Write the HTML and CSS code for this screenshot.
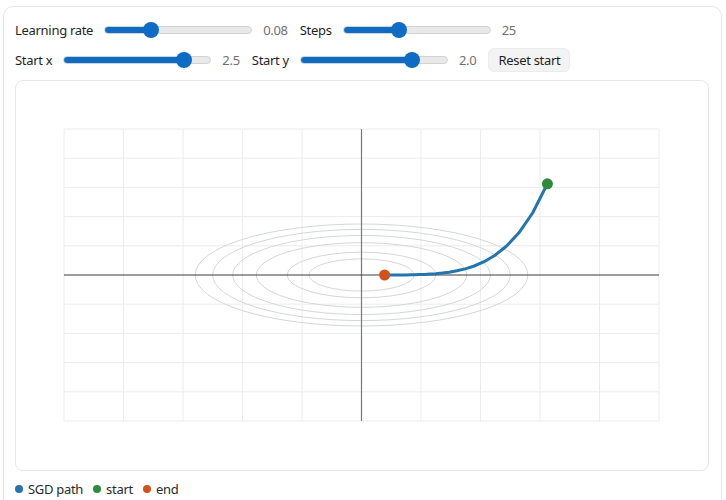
FILE: index.html
```html
<!DOCTYPE html>
<html lang="en">
<head>
<meta charset="utf-8">
<title>SGD path</title>
<link rel="stylesheet" href="styles.css">
</head>
<body>
<div class="card">
  <div class="controls">
    <div class="row">
      <label class="ctl"><span class="lbl">Learning rate</span><input class="slider" type="range" min="0.01" max="0.25" step="0.01" value="0.08" style="--p:46.5px"><span class="val">0.08</span></label>
      <label class="ctl"><span class="lbl">Steps</span><input class="slider" type="range" min="5" max="60" step="1" value="25" style="--p:56px"><span class="val">25</span></label>
    </div>
    <div class="row">
      <label class="ctl"><span class="lbl">Start x</span><input class="slider" type="range" min="-3.5" max="3.5" step="0.1" value="2.5" style="--p:121px"><span class="val">2.5</span></label>
      <label class="ctl"><span class="lbl">Start y</span><input class="slider" type="range" min="-3" max="3.3" step="0.1" value="2.0" style="--p:112.8px"><span class="val">2.0</span></label>
      <button class="btn" type="button">Reset start</button>
    </div>
  </div>
  <div class="plot">
    <svg class="chart" width="691" height="389" viewBox="0 0 691 389">
      <g class="grid">
        <line x1="48" y1="48" x2="48" y2="340"/>
        <line x1="107.5" y1="48" x2="107.5" y2="340"/>
        <line x1="167" y1="48" x2="167" y2="340"/>
        <line x1="226.5" y1="48" x2="226.5" y2="340"/>
        <line x1="286" y1="48" x2="286" y2="340"/>
        <line x1="405" y1="48" x2="405" y2="340"/>
        <line x1="464.5" y1="48" x2="464.5" y2="340"/>
        <line x1="524" y1="48" x2="524" y2="340"/>
        <line x1="583.5" y1="48" x2="583.5" y2="340"/>
        <line x1="643" y1="48" x2="643" y2="340"/>
        <line x1="48" y1="48" x2="643" y2="48"/>
        <line x1="48" y1="77.2" x2="643" y2="77.2"/>
        <line x1="48" y1="106.4" x2="643" y2="106.4"/>
        <line x1="48" y1="135.6" x2="643" y2="135.6"/>
        <line x1="48" y1="164.8" x2="643" y2="164.8"/>
        <line x1="48" y1="223.2" x2="643" y2="223.2"/>
        <line x1="48" y1="252.4" x2="643" y2="252.4"/>
        <line x1="48" y1="281.6" x2="643" y2="281.6"/>
        <line x1="48" y1="310.8" x2="643" y2="310.8"/>
        <line x1="48" y1="340" x2="643" y2="340"/>
      </g>
      <g class="contours">
        <ellipse cx="345.5" cy="194" rx="52.6" ry="16.1"/>
        <ellipse cx="345.5" cy="194" rx="74.4" ry="22.8"/>
        <ellipse cx="345.5" cy="194" rx="105.2" ry="32.3"/>
        <ellipse cx="345.5" cy="194" rx="128.8" ry="39.5"/>
        <ellipse cx="345.5" cy="194" rx="148.8" ry="45.6"/>
        <ellipse cx="345.5" cy="194" rx="166.3" ry="51"/>
      </g>
      <line class="axis-y" x1="345.5" y1="48" x2="345.5" y2="340"/>
      <line class="axis-x" x1="48" y1="194" x2="643" y2="194"/>
      <polyline class="sgd" points="531.4,102.8 516.6,132 502.9,151.8 490.3,165.3 478.7,174.5 468.1,180.7 458.2,185 449.2,187.9 440.9,189.8 433.3,191.2 426.3,192.1 419.8,192.7 413.9,193.1 408.4,193.4 403.4,193.6 398.7,193.7 394.5,193.8 390.6,193.9 387,193.9 383.6,193.9 380.6,194 377.8,194 375.2,194 372.8,194 370.6,194 368.6,194"/>
      <circle class="pt-start" cx="531.4" cy="102.8" r="5.5"/>
      <circle class="pt-end" cx="368.6" cy="194" r="5.5"/>
    </svg>
  </div>
  <div class="legend">
    <span class="item"><span class="dot dot-path"></span>SGD path</span>
    <span class="item"><span class="dot dot-start"></span>start</span>
    <span class="item"><span class="dot dot-end"></span>end</span>
  </div>
</div>
</body>
</html>
```

FILE: styles.css
```css
html, body {
  margin: 0;
  padding: 0;
  background: #ffffff;
}

body {
  font-family: "Noto Sans", "Open Sans", "DejaVu Sans", sans-serif;
  font-size: 13px;
  letter-spacing: -0.3px;
  color: #1f1f1f;
}

.card {
  box-sizing: border-box;
  width: 719px;
  margin: 6px 0 0 3px;
  padding: 11px 12px 12px 11px;
  border: 1px solid #e7e7e7;
  border-radius: 10px;
  background: #ffffff;
}

.controls {
  display: flex;
  flex-direction: column;
  gap: 6px;
}

.row {
  display: flex;
  align-items: center;
  gap: 12px;
  height: 24px;
}

.ctl {
  display: flex;
  align-items: center;
  gap: 11px;
}

.lbl {
  color: #1f1f1f;
  white-space: nowrap;
}

.val {
  color: #707070;
  white-space: nowrap;
}

.slider {
  -webkit-appearance: none;
  appearance: none;
  width: 148px;
  height: 16px;
  margin: 0;
  padding: 0;
  background: transparent;
}

.slider::-webkit-slider-runnable-track {
  height: 8px;
  box-sizing: border-box;
  border-radius: 4px;
  border: 1px solid #d2d2d2;
  background: linear-gradient(to right, #0f6cc4 0, #0f6cc4 var(--p), #e9e9e9 var(--p), #e9e9e9 100%);
}

.slider::-webkit-slider-thumb {
  -webkit-appearance: none;
  appearance: none;
  width: 16px;
  height: 16px;
  margin-top: -5px;
  border-radius: 50%;
  background: #0f6cc4;
  border: none;
}

.btn {
  box-sizing: border-box;
  height: 24px;
  padding: 0 9px;
  font-family: inherit;
  font-size: 13px;
  letter-spacing: inherit;
  color: #1f1f1f;
  background: #f3f3f3;
  border: 1px solid #ececec;
  border-radius: 6px;
}

.plot {
  box-sizing: border-box;
  margin-top: 8px;
  height: 391px;
  border: 1px solid #e7e7e7;
  border-radius: 8px;
  overflow: hidden;
}

.chart {
  display: block;
}

.grid line {
  stroke: #ececec;
  stroke-width: 1;
}

.contours ellipse {
  fill: none;
  stroke: #d3d7d9;
  stroke-width: 1;
}

.axis-x {
  stroke: #3a3a3a;
  stroke-width: 1;
}

.axis-y {
  stroke: #7a7a7a;
  stroke-width: 1.2;
}

.sgd {
  fill: none;
  stroke: #2474ae;
  stroke-width: 3;
  stroke-linejoin: round;
  stroke-linecap: round;
}

.pt-start {
  fill: #2e8b3e;
}

.pt-end {
  fill: #d4521a;
}

.legend {
  display: flex;
  align-items: center;
  gap: 10px;
  margin-top: 9px;
  height: 18px;
  color: #2a2a2a;
}

.item {
  display: flex;
  align-items: center;
  gap: 5px;
}

.dot {
  width: 8px;
  height: 8px;
  border-radius: 50%;
}

.dot-path { background: #2474ae; }
.dot-start { background: #2e8b3e; }
.dot-end { background: #d4521a; }
```
